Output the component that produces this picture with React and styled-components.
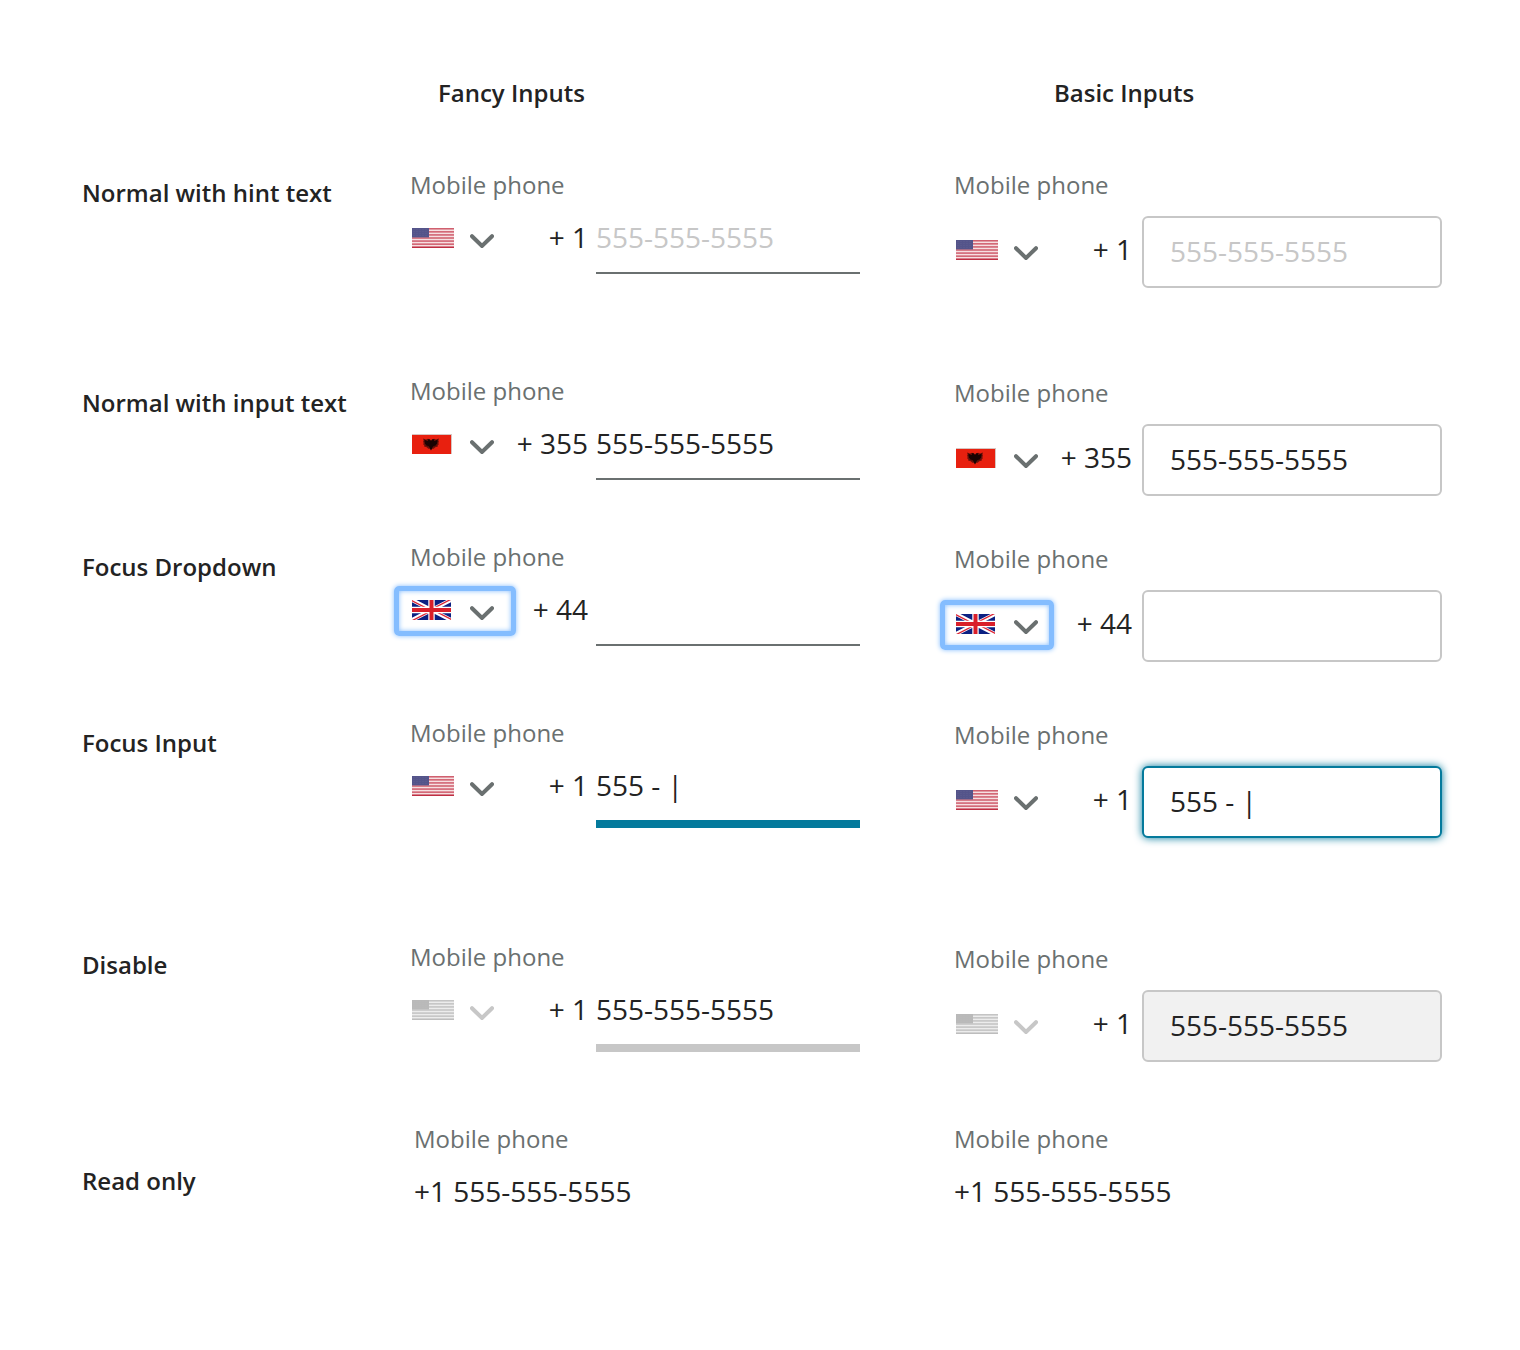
import React, { useId } from "react";
import styled, { createGlobalStyle, css } from "styled-components";

const color = {
  text: "#232323",
  muted: "#6a7070",
  line: "#c7c7c7",
  teal: "#047a9c",
  ring: "#84bdff",
  disabledFill: "#f1f1f1",
};

const GlobalStyle = createGlobalStyle`
  *, *::before, *::after { box-sizing: border-box; }
  body {
    margin: 0;
    background: #fff;
    color: ${color.text};
    font-family: "Open Sans", "Noto Sans", sans-serif;
  }
`;

const Page = styled.main`
  padding: 77px 78px 77px 82px;
`;

const Row = styled.section`
  display: grid;
  grid-template-columns: 328fr 544fr 488fr;
  align-items: start;
  margin-bottom: ${(p) => p.$after}px;
`;

const Heading = styled.h2`
  margin: 0;
  padding-left: ${(p) => p.$indent}px;
  font-size: 24px;
  line-height: 32px;
  font-weight: 600;
`;

const RowTitle = styled.h3`
  margin: 0;
  padding-top: ${(p) => p.$top}px;
  font-size: 24px;
  line-height: 32px;
  font-weight: 600;
`;

const Cell = styled.div`
  display: flex;
  flex-direction: column;
  gap: ${(p) => p.$gap}px;
  padding-top: ${(p) => p.$top || 0}px;
  padding-left: ${(p) => p.$left || 0}px;
  padding-right: ${(p) => (p.$basic ? 0 : 94)}px;
`;

const Label = styled.label`
  font-size: 24px;
  line-height: 32px;
  color: ${color.muted};
`;

const Control = styled.div`
  display: grid;
  grid-template-columns: 178px 1fr;
  column-gap: ${(p) => (p.$basic ? 10 : 8)}px;
  align-items: start;
`;

const Prefix = styled.div`
  display: flex;
  align-items: center;
  justify-content: space-between;
  height: 40px;
  padding-left: 2px;
  margin-top: ${(p) => (p.$basic ? 14 : 0)}px;
`;

const Dropdown = styled.div`
  position: relative;
  display: flex;
  align-items: flex-end;
  color: ${(p) => (p.$disabled ? color.line : color.muted)};

  ${(p) =>
    p.$focused &&
    css`
      &::after {
        content: "";
        position: absolute;
        inset: ${p.$basic ? "-14px -16px -16px" : "-14px -22px -16px -18px"};
        border: 5px solid ${color.ring};
        border-radius: 5px;
        box-shadow: 0 0 5px ${color.ring}, inset 0 0 5px ${color.ring};
        pointer-events: none;
      }
    `}
`;

const CountrySelect = styled.select`
  position: absolute;
  inset: 0;
  width: 100%;
  height: 100%;
  opacity: 0;
  cursor: pointer;
`;

const FlagSlot = styled.span`
  display: block;
  width: 58px;
  height: 20px;

  svg { display: block; }
`;

const ChevronIcon = styled.svg`
  display: block;
  width: 24px;
  height: 14px;
`;

const Code = styled.span`
  padding-bottom: 2px;
  font-size: 28px;
  line-height: 38px;
  white-space: nowrap;
`;

const inputText = css`
  display: block;
  width: 100%;
  min-width: 0;
  margin: 0;
  font: inherit;
  font-size: 28px;
  line-height: 38px;
  color: ${color.text};
  background: transparent;
  outline: none;

  &::placeholder { color: ${color.line}; opacity: 1; }
`;

const FancyInput = styled.input`
  ${inputText}
  height: ${(p) => (p.$thick ? 62 : 56)}px;
  padding: 0 0 16px;
  border: 0;
  border-radius: 0;
  border-bottom: ${(p) => (p.$thick ? 8 : 2)}px solid ${(p) =>
    p.disabled ? color.line : p.$focused ? color.teal : color.muted};
`;

const BasicInput = styled.input`
  ${inputText}
  height: 72px;
  padding: 0 26px 2px;
  border: 2px solid ${(p) => (p.$focused ? color.teal : color.line)};
  border-radius: 6px;
  background: ${(p) => (p.disabled ? color.disabledFill : "#fff")};
  box-shadow: ${(p) => (p.$focused ? `0 0 9px ${color.teal}` : "none")};
`;

const ReadOnlyInput = styled.input`
  ${inputText}
  height: 40px;
  padding: 0;
  border: 0;
`;

function UsFlag({ disabled }) {
  const light = disabled ? "#ececec" : "#f6dfe1";
  const stripe = disabled ? "#c4c4c4" : "#d0606f";
  const last = disabled ? "#bdbdbd" : "#bf2f43";
  const canton = disabled ? "#b9b9b9" : "#54548a";
  const star = disabled ? "#c0c0c0" : "#6a6a98";
  return (
    <svg width="42" height="20" viewBox="0 0 42 20" aria-hidden="true">
      <rect width="42" height="20" fill={light} />
      {[0, 1, 2, 3, 4, 5, 6].map((i) => (
        <rect key={i} y={(i * 40) / 13} width="42" height={20 / 13} fill={i === 6 ? last : stripe} />
      ))}
      <rect width="17" height="9.4" fill={canton} />
      {[1.5, 3.5, 5.5, 7.5].map((y) =>
        [1.5, 4.5, 7.5, 10.5, 13.5].map((x) => (
          <rect key={`${x}-${y}`} x={x} y={y} width="1" height="0.6" fill={star} />
        ))
      )}
    </svg>
  );
}

function AlbaniaFlag() {
  return (
    <svg width="40" height="20" viewBox="0 0 40 20" aria-hidden="true">
      <rect width="40" height="20" fill="#d8c4c1" />
      <rect y="1" width="39" height="19" fill="#e8200f" />
      <path
        fill="#6d1009"
        d="M11 4.6 14 5.6 16 4.8 19 6l3-1.2 2 .8 3-1-.6 2.2.6 1-.7 1.2.6 1.2-1.2 1 .2 1.4-2.6.6-1.6 1.6h-5.4l-1.6-1.6-2.6-.6.2-1.4-1.2-1 .6-1.2-.7-1.2.6-1z"
      />
      <path
        fill="#1a0302"
        d="M19 7.2 17.6 5.2 15.6 5.2l.6 1.4-.8.4L12 5.4l.8 1.6-.6 1 1 .8-.5 1 1.2.6-.2 1.2 1.6-.2.4 1.2 1.2-.4.7 1.6.5 1.2.9 1.4.9-1.4.5-1.2.7-1.6 1.2.4.4-1.2 1.6.2-.2-1.2 1.2-.6-.5-1 1-.8-.6-1 .8-1.6-3.4 1.6-.8-.4.6-1.4h-2z"
      />
    </svg>
  );
}

function UkFlag() {
  const clip = useId();
  return (
    <svg width="39" height="20" viewBox="0 0 39 20" aria-hidden="true">
      <defs>
        <clipPath id={clip}>
          <path d="M19.5 10H39v10zM19.5 10v10H0zM19.5 10H0V0zM19.5 10V0H39z" />
        </clipPath>
      </defs>
      <rect width="39" height="20" fill="#0b2082" />
      <path d="M0 0 39 20M39 0 0 20" stroke="#fff" strokeWidth="4" />
      <path d="M0 0 39 20M39 0 0 20" stroke="#dc2334" strokeWidth="2.6" clipPath={`url(#${clip})`} />
      <path d="M19.5 0v20M0 10h39" stroke="#fff" strokeWidth="6.4" />
      <path d="M19.5 0v20M0 10h39" stroke="#d91f2a" strokeWidth="4" />
    </svg>
  );
}

function Flag({ country, disabled }) {
  if (country === "Albania") return <AlbaniaFlag />;
  if (country === "United Kingdom") return <UkFlag />;
  return <UsFlag disabled={disabled} />;
}

function Chevron() {
  return (
    <ChevronIcon viewBox="0 0 24 14" aria-hidden="true">
      <path d="M2 2.2 12 12 22 2.2" fill="none" stroke="currentColor" strokeWidth="4" strokeLinecap="round" />
    </ChevronIcon>
  );
}

function PhoneField({ basic, country, code, value, placeholder, focus, disabled, top }) {
  const id = useId();
  const Input = basic ? BasicInput : FancyInput;
  const focused = focus === "input";
  return (
    <Cell $basic={basic} $top={top} $gap={basic ? 15 : 17}>
      <Label htmlFor={id}>Mobile phone</Label>
      <Control $basic={basic}>
        <Prefix $basic={basic}>
          <Dropdown $basic={basic} $focused={focus === "dropdown"} $disabled={disabled}>
            <FlagSlot>
              <Flag country={country} disabled={disabled} />
            </FlagSlot>
            <Chevron />
            <CountrySelect aria-label="Country" defaultValue={country} disabled={disabled}>
              <option>United States</option>
              <option>Albania</option>
              <option>United Kingdom</option>
            </CountrySelect>
          </Dropdown>
          <Code>+ {code}</Code>
        </Prefix>
        <Input
          id={id}
          type="tel"
          defaultValue={value}
          placeholder={placeholder}
          disabled={disabled}
          $focused={focused}
          $thick={focused || disabled}
        />
      </Control>
    </Cell>
  );
}

function ReadOnlyField({ basic, left }) {
  const id = useId();
  return (
    <Cell $left={left} $basic={basic} $gap={16}>
      <Label htmlFor={id}>Mobile phone</Label>
      <ReadOnlyInput id={id} type="tel" readOnly defaultValue="+1 555-555-5555" />
    </Cell>
  );
}

const rows = [
  { title: "Normal with hint text", titleTop: 8, after: 87, country: "United States", code: "1", placeholder: "555-555-5555" },
  { title: "Normal with input text", titleTop: 12, after: 45, basicTop: 2, country: "Albania", code: "355", value: "555-555-5555" },
  { title: "Focus Dropdown", titleTop: 10, after: 55, basicTop: 2, country: "United Kingdom", code: "44", focus: "dropdown" },
  { title: "Focus Input", titleTop: 10, after: 103, basicTop: 2, country: "United States", code: "1", value: "555 - |", focus: "input" },
  { title: "Disable", titleTop: 8, after: 61, basicTop: 2, country: "United States", code: "1", value: "555-555-5555", disabled: true },
];

export default function App() {
  return (
    <>
      <GlobalStyle />
      <Page>
        <Row $after={60}>
          <span />
          <Heading $indent={28}>Fancy Inputs</Heading>
          <Heading $indent={100}>Basic Inputs</Heading>
        </Row>
        {rows.map(({ title, titleTop, after, basicTop, ...field }) => (
          <Row key={title} $after={after}>
            <RowTitle $top={titleTop}>{title}</RowTitle>
            <PhoneField {...field} />
            <PhoneField basic top={basicTop} {...field} />
          </Row>
        ))}
        <Row $after={0}>
          <RowTitle $top={42}>Read only</RowTitle>
          <ReadOnlyField left={4} />
          <ReadOnlyField basic />
        </Row>
      </Page>
    </>
  );
}
